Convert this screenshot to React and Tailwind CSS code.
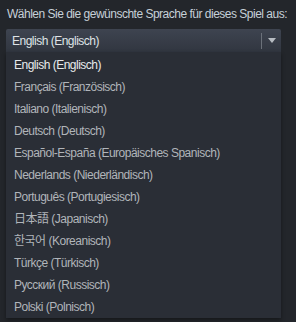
import React from "react";

const languages = [
  "English (Englisch)",
  "Français (Französisch)",
  "Italiano (Italienisch)",
  "Deutsch (Deutsch)",
  "Español-España (Europäisches Spanisch)",
  "Nederlands (Niederländisch)",
  "Português (Portugiesisch)",
  "日本語 (Japanisch)",
  "한국어 (Koreanisch)",
  "Türkçe (Türkisch)",
  "Русский (Russisch)",
  "Polski (Polnisch)",
];

export default function App() {
  return (
    <div
      className="w-[296px] h-[322px] overflow-hidden bg-[#23262b] pt-[7px] pl-[6px]"
      style={{ fontFamily: '"Liberation Sans", Arial, "Noto Sans CJK JP", "Noto Sans CJK KR", sans-serif' }}
    >
      <div className="text-[12px] leading-[15px] tracking-[-0.5px] text-[#c6d0d8] pl-[1px] whitespace-nowrap">
        Wählen Sie die gewünschte Sprache für dieses Spiel aus:
      </div>
      <div className="w-[275px] mt-[7px]">
        <div className="h-[23px] flex items-center bg-gradient-to-b from-[#3e4450] to-[#313640] rounded-t-[2px]">
          <span className="flex-1 pl-[6px] text-[12px] tracking-[-0.5px] text-[#dfe3e6]">English (Englisch)</span>
          <span className="w-px h-[16px] bg-[#6b717a]" />
          <span className="w-[19px] flex justify-center">
            <svg width="8" height="5" viewBox="0 0 8 5">
              <path d="M0 0h8L4 5z" fill="#b7bcc2" />
            </svg>
          </span>
        </div>
        <div className="bg-[#2a2e36] pt-[2px] shadow-[0_2px_4px_rgba(0,0,0,0.4)]">
          {languages.map((l, i) => (
            <div
              key={l}
              className={
                "h-[22px] flex items-center pl-[8px] text-[12px] tracking-[-0.5px] whitespace-nowrap " +
                (i === 0 ? "text-[#e8eaec]" : "text-[#b1b5ba]")
              }
            >
              {l}
            </div>
          ))}
        </div>
      </div>
    </div>
  );
}
